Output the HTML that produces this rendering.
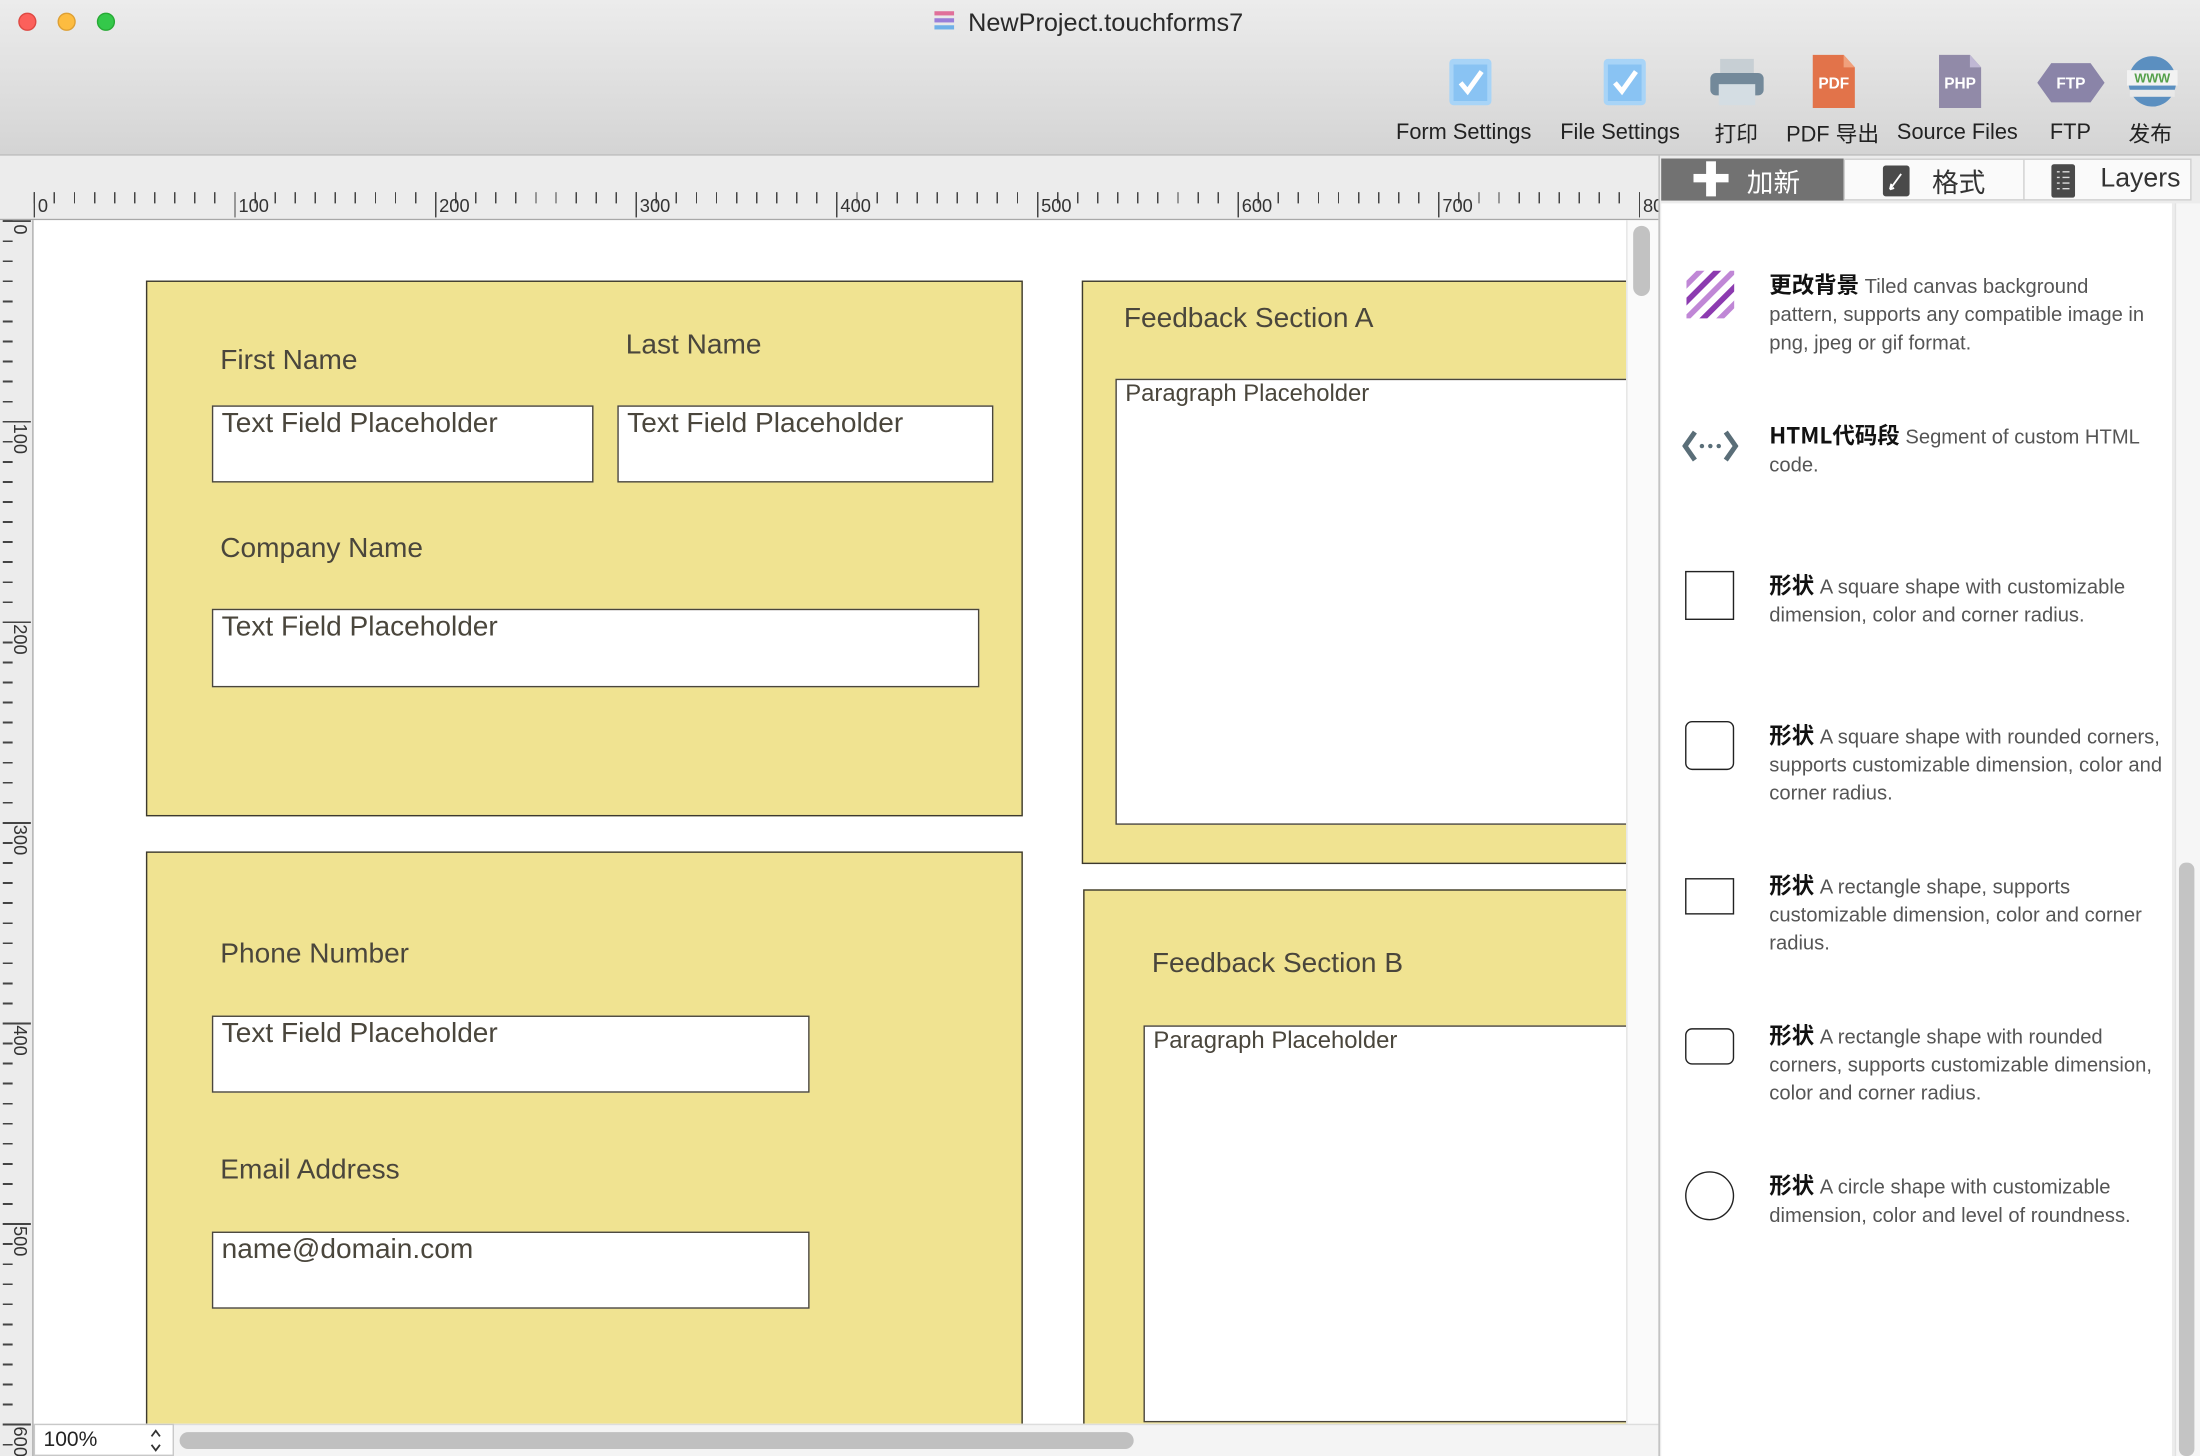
<!DOCTYPE html>
<html><head><meta charset="utf-8"><style>
*{margin:0;padding:0;box-sizing:border-box}
html,body{width:2200px;height:1456px;overflow:hidden;background:#fff;position:relative}
#w{position:absolute;left:0;top:0;width:2200px;height:1456px;overflow:hidden}
#s{position:absolute;left:0;top:0;width:1568px;height:1038px;overflow:hidden;transform:scale(1.40306,1.4027);transform-origin:0 0;font-family:"Liberation Sans","Noto Sans CJK SC",sans-serif;color:#333}
.a{position:absolute}
.lbl{position:absolute;font-size:20px;color:#4a463c;white-space:nowrap}
.fld{position:absolute;background:#fff;border:1.5px solid #4a463c;font-size:20px;color:#4a463c;padding:0 0 0 6px;line-height:24px;white-space:nowrap;overflow:hidden}
.box{position:absolute;background:#f0e391;border:1.5px solid #3c392f}
.tb{position:absolute;top:86px;font-size:15.5px;color:#222;white-space:nowrap}
.item{position:absolute;left:1261px;width:300px;font-size:14.4px;line-height:20px;color:#555;white-space:nowrap}
.item b{color:#111;font-size:16px;font-family:"Noto Sans CJK SC","Liberation Sans",sans-serif;font-weight:700}
.ic{position:absolute;left:1201px;border:1.3px solid #222}
</style></head><body><div id="w"><div id="s">
<div class="a" style="left:0;top:0;width:1568px;height:111px;background:linear-gradient(#ececec,#d4d4d4);border-bottom:1px solid #b5b5b5"></div>
<div class="a" style="left:13px;top:9px;width:13px;height:13px;border-radius:50%;background:#fc605b;border:0.5px solid #de4943"></div>
<div class="a" style="left:41px;top:9px;width:13px;height:13px;border-radius:50%;background:#fdbc40;border:0.5px solid #dea034"></div>
<div class="a" style="left:69px;top:9px;width:13px;height:13px;border-radius:50%;background:#34c84a;border:0.5px solid #27aa35"></div>
<div class="a" style="left:666px;top:8px;width:14px;height:3px;background:#e0709a"></div>
<div class="a" style="left:666px;top:13px;width:14px;height:3px;background:#9a7ed8"></div>
<div class="a" style="left:666px;top:18px;width:14px;height:3px;background:#6fb0e8"></div>
<div class="a" style="left:690px;top:6px;font-size:18px;color:#2a2a2a">NewProject.touchforms7</div>
<div class="a" style="left:1033px;top:42px;width:30px;height:33px;background:#a8d4f7;border-radius:3px"></div>
<div class="a" style="left:1036px;top:46px;width:24px;height:26px;background:#89c3f3"></div>
<svg class="a" style="left:1033px;top:42px" width="30" height="33"><path d="M8 17 L13 23 L23 9" stroke="#fff" stroke-width="3.5" fill="none"/></svg>
<div class="a" style="left:1143px;top:42px;width:30px;height:33px;background:#a8d4f7;border-radius:3px"></div>
<div class="a" style="left:1146px;top:46px;width:24px;height:26px;background:#89c3f3"></div>
<svg class="a" style="left:1143px;top:42px" width="30" height="33"><path d="M8 17 L13 23 L23 9" stroke="#fff" stroke-width="3.5" fill="none"/></svg>
<div class="a" style="left:1226px;top:42px;width:24px;height:12px;background:#c7cfd4"></div>
<div class="a" style="left:1219px;top:52px;width:38px;height:16px;background:#73899a;border-radius:4px"></div>
<div class="a" style="left:1225px;top:60px;width:26px;height:15px;background:#d4dde3"></div>
<svg class="a" style="left:1290px;top:39px" width="34" height="38"><path d="M2 0 H24 L32 9 V38 H2 Z" fill="#e2734a"/><path d="M24 0 L32 9 H24Z" fill="#f0a07c"/><text x="17" y="24" font-family="Liberation Sans" font-weight="bold" font-size="11" fill="#fff" text-anchor="middle">PDF</text></svg>
<svg class="a" style="left:1380px;top:39px" width="34" height="38"><path d="M2 0 H24 L32 9 V38 H2 Z" fill="#918aa8"/><path d="M24 0 L32 9 H24Z" fill="#c0b8d4"/><text x="17" y="24" font-family="Liberation Sans" font-weight="bold" font-size="11" fill="#fff" text-anchor="middle">PHP</text></svg>
<svg class="a" style="left:1452px;top:42px" width="48" height="34"><path d="M0 17 L10 3 H38 L48 17 L38 31 H10 Z" fill="#8a84a8"/><text x="24" y="21" font-family="Liberation Sans" font-weight="bold" font-size="11" fill="#fff" text-anchor="middle">FTP</text></svg>
<svg class="a" style="left:1514px;top:40px" width="40" height="36"><ellipse cx="20" cy="18" rx="17" ry="18" fill="#5b8fc0"/><rect x="2" y="10" width="36" height="11" fill="#f2f2f2"/><text x="20" y="19" font-family="Liberation Sans" font-weight="bold" font-size="9" fill="#55a04a" text-anchor="middle">WWW</text><rect x="4" y="24" width="32" height="5" fill="#e8e8e8"/></svg>
<div class="tb" style="left:995px">Form Settings</div>
<div class="tb" style="left:1112px">File Settings</div>
<div class="tb" style="left:1222px;top:84px">打印</div>
<div class="tb" style="left:1273px;top:84px">PDF 导出</div>
<div class="tb" style="left:1352px">Source Files</div>
<div class="tb" style="left:1461px">FTP</div>
<div class="tb" style="left:1517px;top:84px">发布</div>
<div class="a" style="left:0;top:111px;width:1182px;height:46px;background:#ececec;border-bottom:1.5px solid #a8a8a8"></div>
<div class="a" style="left:24px;top:137px;width:1158px;height:8px;background:repeating-linear-gradient(90deg,#444 0 1px,transparent 1px 14.3px)"></div>
<div class="a" style="left:24px;top:137px;width:1158px;height:18px;background:repeating-linear-gradient(90deg,#444 0 1px,transparent 1px 143px)"></div>
<div class="a" style="left:27px;top:139px;font-size:13px;color:#333">0</div>
<div class="a" style="left:170px;top:139px;font-size:13px;color:#333">100</div>
<div class="a" style="left:313px;top:139px;font-size:13px;color:#333">200</div>
<div class="a" style="left:456px;top:139px;font-size:13px;color:#333">300</div>
<div class="a" style="left:599px;top:139px;font-size:13px;color:#333">400</div>
<div class="a" style="left:742px;top:139px;font-size:13px;color:#333">500</div>
<div class="a" style="left:885px;top:139px;font-size:13px;color:#333">600</div>
<div class="a" style="left:1028px;top:139px;font-size:13px;color:#333">700</div>
<div class="a" style="left:1171px;top:139px;font-size:13px;color:#333">80</div>
<div class="a" style="left:0;top:157px;width:24px;height:881px;background:#ececec;border-right:1.5px solid #a8a8a8"></div>
<div class="a" style="left:2px;top:157px;width:7px;height:881px;background:repeating-linear-gradient(180deg,#444 0 1.3px,transparent 1.3px 14.3px)"></div>
<div class="a" style="left:2px;top:157px;width:20px;height:881px;background:repeating-linear-gradient(180deg,#444 0 1.3px,transparent 1.3px 143px)"></div>
<div class="a" style="left:22px;top:160px;font-size:13px;transform:rotate(90deg);transform-origin:0 0">0</div>
<div class="a" style="left:22px;top:302px;font-size:13px;transform:rotate(90deg);transform-origin:0 0">100</div>
<div class="a" style="left:22px;top:445px;font-size:13px;transform:rotate(90deg);transform-origin:0 0">200</div>
<div class="a" style="left:22px;top:588px;font-size:13px;transform:rotate(90deg);transform-origin:0 0">300</div>
<div class="a" style="left:22px;top:731px;font-size:13px;transform:rotate(90deg);transform-origin:0 0">400</div>
<div class="a" style="left:22px;top:874px;font-size:13px;transform:rotate(90deg);transform-origin:0 0">500</div>
<div class="a" style="left:22px;top:1017px;font-size:13px;transform:rotate(90deg);transform-origin:0 0">600</div>
<div class="a" style="left:24px;top:157px;width:1135px;height:858px;background:#fff;overflow:hidden">
 <div style="position:absolute;left:-24px;top:-157px;width:1200px;height:1100px">
  <div class="box" style="left:104px;top:200px;width:625px;height:382px"></div>
  <div class="lbl" style="left:157px;top:246px">First Name</div>
  <div class="lbl" style="left:446px;top:235px">Last Name</div>
  <div class="fld" style="left:151px;top:289px;width:272px;height:55px">Text Field Placeholder</div>
  <div class="fld" style="left:440px;top:289px;width:268px;height:55px">Text Field Placeholder</div>
  <div class="lbl" style="left:157px;top:380px">Company Name</div>
  <div class="fld" style="left:151px;top:434px;width:547px;height:56px">Text Field Placeholder</div>
  <div class="box" style="left:104px;top:607px;width:625px;height:480px"></div>
  <div class="lbl" style="left:157px;top:669px">Phone Number</div>
  <div class="fld" style="left:151px;top:724px;width:426px;height:55px">Text Field Placeholder</div>
  <div class="lbl" style="left:157px;top:823px">Email Address</div>
  <div class="fld" style="left:151px;top:878px;width:426px;height:55px">name@domain.com</div>
  <div class="box" style="left:771px;top:200px;width:420px;height:416px"></div>
  <div class="lbl" style="left:801px;top:216px">Feedback Section A</div>
  <div class="fld" style="left:795px;top:270px;width:400px;height:318px;font-size:17px;line-height:20px">Paragraph Placeholder</div>
  <div class="box" style="left:772px;top:634px;width:420px;height:460px"></div>
  <div class="lbl" style="left:821px;top:676px">Feedback Section B</div>
  <div class="fld" style="left:815px;top:731px;width:400px;height:283px;font-size:17px;line-height:20px">Paragraph Placeholder</div>
 </div>
</div>
<div class="a" style="left:1159px;top:157px;width:23px;height:858px;background:#fafafa;border-left:1px solid #e4e4e4"></div>
<div class="a" style="left:1164px;top:161px;width:12px;height:50px;border-radius:6px;background:#c2c2c2"></div>
<div class="a" style="left:24px;top:1015px;width:1158px;height:23px;background:#f4f4f4;border-top:1px solid #ddd"></div>
<div class="a" style="left:24px;top:1015px;width:100px;height:23px;background:#fff;border:1px solid #c8c8c8;font-size:15px;padding:2px 0 0 6px;color:#222">100%</div>
<svg class="a" style="left:105px;top:1017px" width="12" height="20"><path d="M3 7 L6 3 L9 7 M3 13 L6 17 L9 13" stroke="#333" stroke-width="1.3" fill="none"/></svg>
<div class="a" style="left:128px;top:1021px;width:680px;height:12px;border-radius:6px;background:#c0c0c0"></div>
<div class="a" style="left:1182px;top:111px;width:386px;height:927px;background:#ececec;border-left:1.5px solid #bcbcbc"></div>
<div class="a" style="left:1184px;top:113px;width:378px;height:30px;background:#fafafa;border:1px solid #cfcfcf"></div>
<div class="a" style="left:1184px;top:113px;width:130px;height:30px;background:#727272"></div>
<div class="a" style="left:1314px;top:113px;width:1px;height:30px;background:#d0d0d0"></div>
<div class="a" style="left:1442px;top:113px;width:1px;height:30px;background:#d0d0d0"></div>
<div class="a" style="left:1207px;top:124px;width:25px;height:6px;background:#fff"></div>
<div class="a" style="left:1216px;top:115px;width:7px;height:25px;background:#fff"></div>
<div class="a" style="left:1245px;top:116px;font-size:19px;color:#fff">加新</div>
<div class="a" style="left:1342px;top:118px;width:19px;height:22px;background:#4a4a4a;border-radius:2px"></div>
<svg class="a" style="left:1342px;top:118px" width="19" height="22"><path d="M5 17 L13 6 M5 17 L6 13 M5 17 L8 16" stroke="#fff" stroke-width="1.3" fill="none"/></svg>
<div class="a" style="left:1377px;top:116px;font-size:19px;color:#333">格式</div>
<svg class="a" style="left:1462px;top:117px" width="17" height="24"><rect width="17" height="24" rx="2" fill="#4a4a4a"/><g stroke="#ddd" stroke-width="1"><path d="M4 5.5H6 M8 5.5H13 M4 9.5H6 M8 9.5H13 M4 13.5H6 M8 13.5H13 M4 17.5H6 M8 17.5H13"/></g></svg>
<div class="a" style="left:1497px;top:117px;font-size:19px;color:#333">Layers</div>
<div class="a" style="left:1184px;top:145px;width:364px;height:893px;background:#fff"></div>
<div class="a" style="left:1550px;top:145px;width:18px;height:893px;background:#f6f6f6;border-left:1px solid #e2e2e2"></div>
<div class="a" style="left:1553px;top:615px;width:11px;height:423px;border-radius:5px;background:#c4c4c4"></div>
<svg class="a" style="left:1202px;top:193px" width="34" height="34"><defs><clipPath id="c"><rect width="34" height="34"/></clipPath></defs><g clip-path="url(#c)" stroke-width="4"><path d="M-4 14 L14 -4" stroke="#c087d6"/><path d="M-4 26 L26 -4" stroke="#8c3bb0"/><path d="M-4 38 L38 -4" stroke="#c087d6"/><path d="M8 38 L38 8" stroke="#8c3bb0"/><path d="M20 38 L38 20" stroke="#c087d6"/></g></svg>
<div class="item" style="top:192px"><b>更改背景</b> Tiled canvas background<br>pattern, supports any compatible image in<br>png, jpeg or gif format.</div>
<svg class="a" style="left:1199px;top:305px" width="40" height="26"><path d="M9 3 L2 13 L9 23 M31 3 L38 13 L31 23" stroke="#5a6e78" stroke-width="3.5" fill="none"/><circle cx="14" cy="13" r="1.6" fill="#5a6e78"/><circle cx="20" cy="13" r="1.6" fill="#5a6e78"/><circle cx="26" cy="13" r="1.6" fill="#5a6e78"/></svg>
<div class="item" style="top:299px"><b>HTML代码段</b> Segment of custom HTML<br>code.</div>
<div class="ic" style="top:407px;width:35px;height:35px"></div>
<div class="item" style="top:406px"><b>形状</b> A square shape with customizable<br>dimension, color and corner radius.</div>
<div class="ic" style="top:514px;width:35px;height:35px;border-radius:5px"></div>
<div class="item" style="top:513px"><b>形状</b> A square shape with rounded corners,<br>supports customizable dimension, color and<br>corner radius.</div>
<div class="ic" style="top:626px;width:35px;height:26px"></div>
<div class="item" style="top:620px"><b>形状</b> A rectangle shape, supports<br>customizable dimension, color and corner<br>radius.</div>
<div class="ic" style="top:733px;width:35px;height:26px;border-radius:5px"></div>
<div class="item" style="top:727px"><b>形状</b> A rectangle shape with rounded<br>corners, supports customizable dimension,<br>color and corner radius.</div>
<div class="ic" style="top:835px;width:35px;height:35px;border-radius:50%"></div>
<div class="item" style="top:834px"><b>形状</b> A circle shape with customizable<br>dimension, color and level of roundness.</div>
</div></div></body></html>
